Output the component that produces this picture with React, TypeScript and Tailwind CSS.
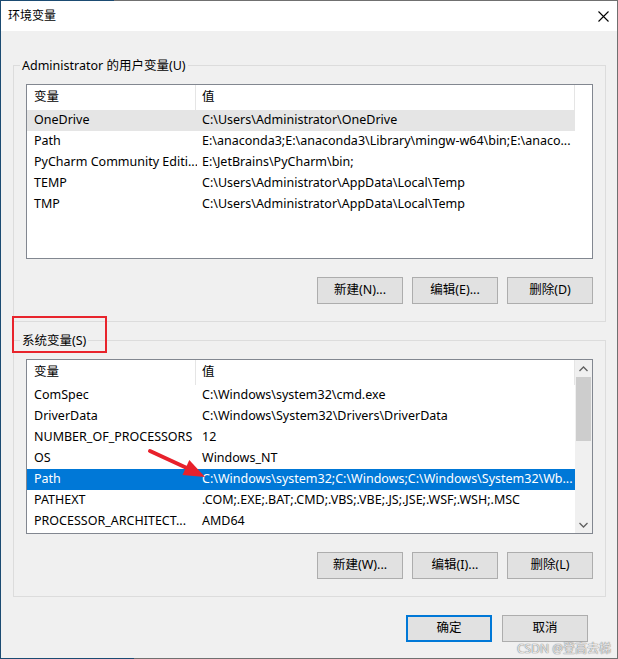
import React from "react";

type Row = { name: string; value: string; sel?: "soft" | "blue" };

const userVars: Row[] = [
  { name: "OneDrive", value: "C:\\Users\\Administrator\\OneDrive", sel: "soft" },
  { name: "Path", value: "E:\\anaconda3;E:\\anaconda3\\Library\\mingw-w64\\bin;E:\\anaco..." },
  { name: "PyCharm Community Editi...", value: "E:\\JetBrains\\PyCharm\\bin;" },
  { name: "TEMP", value: "C:\\Users\\Administrator\\AppData\\Local\\Temp" },
  { name: "TMP", value: "C:\\Users\\Administrator\\AppData\\Local\\Temp" },
];

const sysVars: Row[] = [
  { name: "ComSpec", value: "C:\\Windows\\system32\\cmd.exe" },
  { name: "DriverData", value: "C:\\Windows\\System32\\Drivers\\DriverData" },
  { name: "NUMBER_OF_PROCESSORS", value: "12" },
  { name: "OS", value: "Windows_NT" },
  { name: "Path", value: "C:\\Windows\\system32;C:\\Windows;C:\\Windows\\System32\\Wb...", sel: "blue" },
  { name: "PATHEXT", value: ".COM;.EXE;.BAT;.CMD;.VBS;.VBE;.JS;.JSE;.WSF;.WSH;.MSC" },
  { name: "PROCESSOR_ARCHITECT...", value: "AMD64" },
];

function Chevron({ up }: { up?: boolean }) {
  return (
    <svg width="9" height="6" viewBox="0 0 9 6">
      <path
        d={up ? "M0.5 5 L4.5 1 L8.5 5" : "M0.5 1 L4.5 5 L8.5 1"}
        fill="none"
        stroke="#606060"
        strokeWidth="1.3"
      />
    </svg>
  );
}

function VarList({ rows, scroll }: { rows: Row[]; scroll?: boolean }) {
  return (
    <div className="flex h-[175px] w-full border border-[#828790] bg-white overflow-hidden">
      <div className="w-[548px] flex flex-col">
        <div className="flex h-[25px] shrink-0 items-center border-r border-[#e5e5e5]">
          <div className="w-[169px] h-full flex items-center pl-[7px] border-r border-[#e5e5e5]">变量</div>
          <div className="flex-1 pl-[6px]">值</div>
        </div>
        {rows.map((r) => (
          <div
            key={r.name + r.value}
            className={`flex h-[21px] shrink-0 items-center whitespace-nowrap overflow-hidden ${
              r.sel === "blue"
                ? "bg-[#0078d7] text-white"
                : r.sel === "soft"
                ? "bg-[#e5e5e5]"
                : ""
            }`}
          >
            <div className="w-[170px] pl-[7px] overflow-hidden">{r.name}</div>
            <div className="flex-1 pl-[5px] overflow-hidden">{r.value}</div>
          </div>
        ))}
      </div>
      {scroll && (
        <div className="w-[17px] flex flex-col bg-[#f0f0f0]">
          <div className="h-[17px] flex items-center justify-center">
            <Chevron up />
          </div>
          <div className="h-[64px] mx-[1px] bg-[#cdcdcd]" />
          <div className="flex-1" />
          <div className="h-[17px] flex items-center justify-center">
            <Chevron />
          </div>
        </div>
      )}
    </div>
  );
}

function Btn({ label, primary }: { label: string; primary?: boolean }) {
  return (
    <button
      className={`w-[86px] h-[27px] flex items-center justify-center bg-[#e1e1e1] ${
        primary ? "border-2 border-[#0078d7]" : "border border-[#adadad]"
      }`}
    >
      {label}
    </button>
  );
}

function Group({
  title,
  rows,
  buttons,
  scroll,
  className,
}: {
  title: string;
  rows: Row[];
  buttons: string[];
  scroll?: boolean;
  className: string;
}) {
  return (
    <fieldset className={`border border-[#dcdcdc] px-[12px] pb-[17px] ${className}`}>
      <legend className="-ml-[6px] px-[2px] leading-[17px]">{title}</legend>
      <div className="mt-[10px]">
        <VarList rows={rows} scroll={scroll} />
      </div>
      <div className="flex justify-end gap-[9px] mt-[18px]">
        {buttons.map((b) => (
          <Btn key={b} label={b} />
        ))}
      </div>
    </fieldset>
  );
}

export default function App() {
  return (
    <div className="relative w-[618px] h-[659px] flex flex-col bg-[#f0f0f0] border-l border-r border-l-[#1b4b72] border-r-[#707070] overflow-hidden font-[Noto_Sans,Noto_Sans_CJK_SC,sans-serif] text-[12.5px] text-black">
      <div className="flex h-px shrink-0">
        <div className="w-[113px] bg-[#1b4b72]" />
        <div className="flex-1 bg-[#707070]" />
      </div>

      {/* title bar */}
      <div className="h-[30px] shrink-0 bg-white flex items-center justify-between pl-[7px] pr-[8px] text-[12px]">
        <span>环境变量</span>
        <svg width="11" height="11" viewBox="0 0 11 11">
          <path d="M0.5 0.5 L10.5 10.5 M10.5 0.5 L0.5 10.5" stroke="#000" strokeWidth="1.1" />
        </svg>
      </div>

      <div className="flex-1 flex flex-col pl-[12px] pr-[11px]">
        <Group
          className="mt-[26px]"
          title="Administrator 的用户变量(U)"
          rows={userVars}
          buttons={["新建(N)...", "编辑(E)...", "删除(D)"]}
        />
        <Group
          className="mt-[10px]"
          title="系统变量(S)"
          rows={sysVars}
          scroll
          buttons={["新建(W)...", "编辑(I)...", "删除(L)"]}
        />
        <div className="flex justify-end gap-[10px] mt-[18px] pr-[18px]">
          <Btn label="确定" primary />
          <Btn label="取消" />
        </div>
      </div>

      <div className="flex h-px shrink-0">
        <div className="w-[133px] bg-[#1b4b72]" />
        <div className="flex-1 bg-[#707070]" />
      </div>

      {/* annotations */}
      <div className="absolute left-[11px] top-[316px] w-[95px] h-[37px] border-2 border-[#e8242c]" />
      <svg className="absolute left-0 top-0 pointer-events-none" width="618" height="659">
        <line x1="149" y1="451" x2="188" y2="469" stroke="#e8212b" strokeWidth="4" strokeLinecap="round" />
        <polygon points="204,477 181.5,475 188.3,460" fill="#e8212b" />
      </svg>
      <div className="absolute right-[6px] bottom-[4px] text-[12px] leading-none text-white/80 [text-shadow:0_0_1px_#777,0_0_1px_#777]">
        CSDN @登高去梯
      </div>
    </div>
  );
}
